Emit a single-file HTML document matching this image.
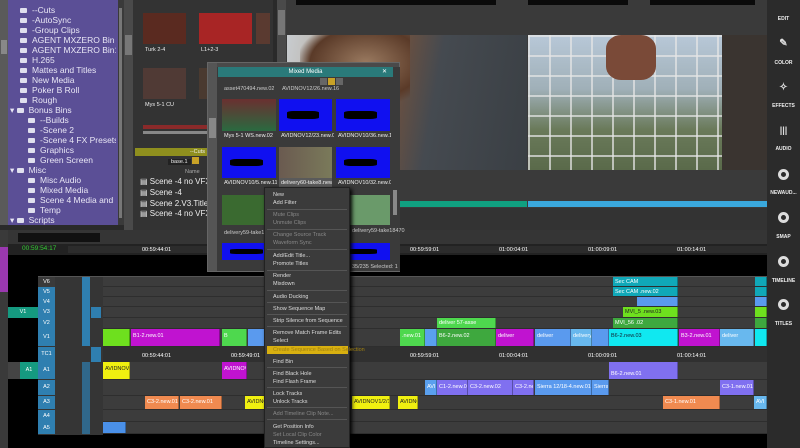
<!DOCTYPE html><html><head><meta charset="utf-8"><style>
*{margin:0;padding:0;box-sizing:border-box}
body{width:800px;height:448px;overflow:hidden;background:#2a2a2a;font-family:"Liberation Sans",sans-serif;position:relative}
div{position:absolute}
.t{white-space:nowrap;overflow:hidden}
.pl{left:20px;width:96px;color:#e8e6f5;font-size:8.5px;line-height:10px}
.pl i{display:inline-block;width:7px;height:5px;background:#e0e0ee;margin-right:5px;border-radius:1px}
.mi{left:8px;font-size:5.5px;color:#ddd;line-height:8px}
.dis{color:#888}
.sep{left:2px;right:2px;height:1px;background:#555}
.lab{font-size:5.5px;color:#eee;white-space:nowrap;overflow:hidden}
.wav{background:#1010f0}
.wav:after{content:"";position:absolute;left:15%;right:25%;top:38%;bottom:38%;background:#000;border-radius:20%}
.row{left:103px;width:664px;background:#3c3c3c;border-bottom:1px solid #2e2e2e}
.c{height:100%;top:0;font-size:5.5px;color:#fff;padding:4px 2px;white-space:nowrap;overflow:hidden;border-right:1px solid rgba(0,0,0,.3)}
.hd{background:#2f7fb0;color:#fff;font-size:5.5px;text-align:center}
.sb{left:767px;width:33px;color:#eee;font-size:5px;font-weight:bold;text-align:center}
.ic{left:778px;width:11px;height:11px;border-radius:50%;border:3px solid #ddd;background:#2b2b2b}
.rl{font-size:5.5px;color:#fff}
</style></head><body>
<div style="left:0;top:0;width:8px;height:225px;background:#5a5a5a"></div>
<div style="left:1px;top:40px;width:6px;height:14px;background:#888"></div>
<div style="left:8px;top:0;width:110px;height:225px;background:#5b4f96"></div>
<div style="left:118px;top:0;width:6px;height:225px;background:#3a3a3a"></div>
<div style="left:119px;top:8px;width:3px;height:210px;background:#777"></div>
<div class="t pl" style="top:5px"><i></i>--Cuts</div>
<div class="t pl" style="top:15px"><i></i>-AutoSync</div>
<div class="t pl" style="top:25px"><i></i>-Group Clips</div>
<div class="t pl" style="top:35px"><i></i>AGENT MXZERO Bin</div>
<div class="t pl" style="top:45px"><i></i>AGENT MXZERO Bin1</div>
<div class="t pl" style="top:55px"><i></i>H.265</div>
<div class="t pl" style="top:65px"><i></i>Mattes and Titles</div>
<div class="t pl" style="top:75px"><i></i>New Media</div>
<div class="t pl" style="top:85px"><i></i>Poker B Roll</div>
<div class="t pl" style="top:95px"><i></i>Rough</div>
<div class="t pl" style="top:105px;left:10px;width:106px">▾ <i></i>Bonus Bins</div>
<div class="t pl" style="top:115px;left:28px;width:88px"><i></i>--Builds</div>
<div class="t pl" style="top:125px;left:28px;width:88px"><i></i>-Scene 2</div>
<div class="t pl" style="top:135px;left:28px;width:88px"><i></i>-Scene 4 FX Presets</div>
<div class="t pl" style="top:145px;left:28px;width:88px"><i></i>Graphics</div>
<div class="t pl" style="top:155px;left:28px;width:88px"><i></i>Green Screen</div>
<div class="t pl" style="top:165px;left:10px;width:106px">▾ <i></i>Misc</div>
<div class="t pl" style="top:175px;left:28px;width:88px"><i></i>Misc Audio</div>
<div class="t pl" style="top:185px;left:28px;width:88px"><i></i>Mixed Media</div>
<div class="t pl" style="top:195px;left:28px;width:88px"><i></i>Scene 4 Media and Cut</div>
<div class="t pl" style="top:205px;left:28px;width:88px"><i></i>Temp</div>
<div class="t pl" style="top:215px;left:10px;width:106px">▾ <i></i>Scripts</div>
<div style="left:124px;top:0;width:9px;height:230px;background:#4a4a4a"></div>
<div style="left:125px;top:35px;width:7px;height:20px;background:#777"></div>
<div style="left:133px;top:0;width:140px;height:230px;background:#333"></div>
<div style="left:143px;top:13px;width:43px;height:31px;background:#5a2a20"></div>
<div class="lab" style="left:145px;top:47px">Turk 2-4</div>
<div style="left:199px;top:13px;width:53px;height:31px;background:#a82525"></div>
<div class="lab" style="left:201px;top:47px">L1+2-3</div>
<div style="left:256px;top:13px;width:14px;height:31px;background:#5a3a30"></div>
<div style="left:143px;top:68px;width:43px;height:31px;background:#503a35"></div>
<div class="lab" style="left:145px;top:102px">Mys 5-1 CU</div>
<div style="left:199px;top:68px;width:10px;height:31px;background:#4a3a30"></div>
<div style="left:143px;top:125px;width:65px;height:4px;background:#8a2a2a"></div>
<div style="left:143px;top:131px;width:65px;height:3px;background:#888"></div>
<div style="left:135px;top:148px;width:72px;height:8px;background:#8f8f1e"></div>
<div class="lab" style="left:190px;top:149px">--Cuts</div>
<div class="lab" style="left:168px;top:159px;background:#222;padding:0 3px">base.1</div>
<div style="left:192px;top:157px;width:7px;height:7px;background:#c9a227"></div>
<div class="lab" style="left:185px;top:169px;color:#aaa">Name</div>
<div class="lab" style="left:140px;top:177px;font-size:8px;width:67px">▤ Scene -4 no VFX.Copy</div>
<div class="lab" style="left:140px;top:188px;font-size:8px">▤ Scene -4</div>
<div class="lab" style="left:140px;top:199px;font-size:8px;width:67px">▤ Scene 2.V3.Titles</div>
<div class="lab" style="left:140px;top:209px;font-size:8px;width:67px">▤ Scene -4 no VFX</div>
<div style="left:277px;top:0;width:9px;height:230px;background:#4a4a4a"></div>
<div style="left:278px;top:10px;width:7px;height:25px;background:#777"></div>
<div style="left:286px;top:0;width:481px;height:230px;background:#3a3a3a"></div>
<div style="left:296px;top:0;width:200px;height:5px;background:#0a0a0a"></div>
<div style="left:528px;top:0;width:100px;height:5px;background:#0a0a0a"></div>
<div style="left:650px;top:0;width:105px;height:5px;background:#0a0a0a"></div>
<div style="left:287px;top:35px;width:240px;height:135px;background:linear-gradient(100deg,#c8ccd0 0%,#b0a08a 30%,#6a5040 45%,#454a50 60%,#3a3f44 100%)"></div>
<div style="left:300px;top:35px;width:110px;height:70px;background:radial-gradient(ellipse at 60% 40%,#9a7a60,#5a3a28 60%,transparent 75%)"></div>
<div style="left:528px;top:35px;width:195px;height:135px;background:linear-gradient(#b8c8d8,#a0b0b8 40%,#6a7a5a 70%,#5a6a4a);"></div>
<div style="left:528px;top:35px;width:195px;height:135px;background-image:linear-gradient(90deg,rgba(230,230,230,.7) 2px,transparent 2px),linear-gradient(rgba(230,230,230,.7) 2px,transparent 2px);background-size:21px 20px"></div>
<div style="left:722px;top:35px;width:45px;height:135px;background:#3a3430"></div>
<div style="left:606px;top:35px;width:50px;height:45px;background:#7a4a38;border-radius:30%"></div>
<div style="left:287px;top:201px;width:240px;height:6px;background:#10a080"></div>
<div style="left:528px;top:201px;width:239px;height:6px;background:#3aa8dc"></div>
<div style="left:287px;top:208px;width:480px;height:22px;background:#333"></div>
<div style="left:767px;top:0;width:33px;height:448px;background:#2b2b2b"></div>
<div class="sb" style="top:16px">EDIT</div>
<div class="sb" style="top:38px;font-size:10px;color:#ddd">✎</div>
<div class="sb" style="top:60px">COLOR</div>
<div class="sb" style="top:82px;font-size:10px;color:#ddd">✧</div>
<div class="sb" style="top:103px">EFFECTS</div>
<div class="sb" style="top:125px;font-size:9px;color:#ddd">|||</div>
<div class="sb" style="top:146px">AUDIO</div>
<div class="ic" style="top:169px"></div>
<div class="sb" style="top:190px">NEWAUD...</div>
<div class="ic" style="top:212px"></div>
<div class="sb" style="top:234px">SMAP</div>
<div class="ic" style="top:256px"></div>
<div class="sb" style="top:278px">TIMELINE</div>
<div class="ic" style="top:299px"></div>
<div class="sb" style="top:321px">TITLES</div>
<div style="left:0;top:230px;width:767px;height:218px;background:#000"></div>
<div style="left:0;top:230px;width:8px;height:218px;background:#3a3a3a"></div>
<div style="left:0;top:247px;width:8px;height:45px;background:#9a38b0"></div>
<div style="left:8px;top:230px;width:759px;height:14px;background:#353535"></div>
<div style="left:18px;top:233px;width:82px;height:9px;background:#111"></div>
<div style="left:8px;top:244px;width:759px;height:11px;background:#222"></div>
<div class="rl" style="left:22px;top:245px;color:#3c3;font-size:6.5px">00:59:54:17</div>
<div style="left:68px;top:246px;width:699px;height:7px;background:#2c2c2c"></div>
<div class="rl" style="left:142px;top:247px">00:59:44:01</div>
<div class="rl" style="left:410px;top:247px">00:59:59:01</div>
<div class="rl" style="left:499px;top:247px">01:00:04:01</div>
<div class="rl" style="left:588px;top:247px">01:00:09:01</div>
<div class="rl" style="left:677px;top:247px">01:00:14:01</div>
<div style="left:38px;top:276px;width:729px;height:1px;background:#555"></div>
<div style="left:38px;top:277px;width:65px;height:158px;background:#353535"></div>
<div class="hd" style="left:38px;top:277px;width:17px;height:10px;line-height:10px;background:#3a3a3a">V6</div>
<div class="hd" style="left:38px;top:287px;width:17px;height:10px;line-height:10px">V5</div>
<div class="hd" style="left:38px;top:297px;width:17px;height:10px;line-height:10px">V4</div>
<div class="hd" style="left:38px;top:307px;width:17px;height:11px;line-height:11px">V3</div>
<div class="hd" style="left:38px;top:318px;width:17px;height:11px;line-height:11px">V2</div>
<div class="hd" style="left:38px;top:329px;width:17px;height:17px;line-height:17px">V1</div>
<div class="hd" style="left:38px;top:347px;width:17px;height:15px;line-height:15px">TC1</div>
<div class="hd" style="left:38px;top:362px;width:17px;height:17px;line-height:17px">A1</div>
<div class="hd" style="left:38px;top:380px;width:17px;height:15px;line-height:15px">A2</div>
<div class="hd" style="left:38px;top:396px;width:17px;height:13px;line-height:13px">A3</div>
<div class="hd" style="left:38px;top:410px;width:17px;height:12px;line-height:12px">A4</div>
<div class="hd" style="left:38px;top:422px;width:17px;height:12px;line-height:12px">A5</div>
<div style="left:82px;top:277px;width:8px;height:69px;background:#2f7fb0"></div>
<div style="left:91px;top:307px;width:10px;height:11px;background:#2f7fb0"></div>
<div style="left:91px;top:347px;width:10px;height:15px;background:#2f7fb0"></div>
<div style="left:82px;top:362px;width:8px;height:72px;background:#2f7fb0;opacity:.7"></div>
<div class="hd" style="left:8px;top:307px;width:30px;height:11px;line-height:11px;background:#159a80">V1</div>
<div class="hd" style="left:20px;top:362px;width:18px;height:17px;line-height:17px;background:#159a80">A1</div>
<div style="left:8px;top:362px;width:12px;height:17px;background:#444"></div>
<div class="row" style="top:277px;height:10px"><div class="c" style="left:510px;width:65px;background:#10a8b8;padding-top:2px">Sec CAM</div><div class="c" style="left:652px;width:12px;background:#10a8b8"></div></div>
<div class="row" style="top:287px;height:10px"><div class="c" style="left:510px;width:65px;background:#10a8b8;padding-top:2px">Sec CAM .new.02</div><div class="c" style="left:652px;width:12px;background:#10a8b8"></div></div>
<div class="row" style="top:297px;height:10px"><div class="c" style="left:534px;width:41px;background:#5a9aee"></div><div class="c" style="left:652px;width:12px;background:#5a9aee"></div></div>
<div class="row" style="top:307px;height:11px"><div class="c" style="left:520px;width:55px;background:#6ee01e;color:#222;padding-top:2px">MVI_5 .new.03</div><div class="c" style="left:652px;width:12px;background:#6ee01e"></div></div>
<div class="row" style="top:318px;height:11px"><div class="c" style="left:334px;width:59px;background:#4ed84e;padding-top:2px">deliver 57-asse</div><div class="c" style="left:510px;width:65px;background:#3ea83e;padding-top:2px">MVI_56 .02</div><div class="c" style="left:652px;width:12px;background:#3ea83e"></div></div>
<div class="row" style="top:329px;height:18px"><div class="c" style="left:0;width:27px;background:#6ee01e"></div><div class="c" style="left:28px;width:89px;background:#c013d0">B1-2.new.01</div><div class="c" style="left:119px;width:25px;background:#4ed84e">B</div><div class="c" style="left:145px;width:17px;background:#5a9aee"></div><div class="c" style="left:297px;width:25px;background:#4ed84e">.new.01</div><div class="c" style="left:322px;width:12px;background:#5aa0ee"></div><div class="c" style="left:334px;width:59px;background:#3ea83e">B6-2.new.02</div><div class="c" style="left:393px;width:38px;background:#c013d0">deliver</div><div class="c" style="left:432px;width:36px;background:#5a9aee">deliver</div><div class="c" style="left:468px;width:21px;background:#68b8ee">delivery</div><div class="c" style="left:489px;width:17px;background:#5a9aee"></div><div class="c" style="left:506px;width:69px;background:#10e8f0;color:#123">B6-2.new.03</div><div class="c" style="left:576px;width:41px;background:#c013d0">B3-2.new.01</div><div class="c" style="left:617px;width:34px;background:#68b8ee">deliver</div><div class="c" style="left:652px;width:12px;background:#10e8f0"></div></div>
<div style="left:103px;top:347px;width:664px;height:15px;background:#303030"></div>
<div class="rl" style="left:142px;top:353px">00:59:44:01</div>
<div class="rl" style="left:231px;top:353px">00:59:49:01</div>
<div class="rl" style="left:410px;top:353px">00:59:59:01</div>
<div class="rl" style="left:499px;top:353px">01:00:04:01</div>
<div class="rl" style="left:588px;top:353px">01:00:09:01</div>
<div class="rl" style="left:677px;top:353px">01:00:14:01</div>
<div class="row" style="top:362px;height:18px"><div class="c" style="left:0;width:27px;background:#f0f010;color:#222">AVIDNOV11/10</div><div class="c" style="left:119px;width:25px;background:#c013d0">AVIDNOV1</div><div class="c" style="left:506px;width:69px;background:#8070f0;padding-top:9px">B6-2.new.01</div></div>
<div class="row" style="top:380px;height:16px"><div class="c" style="left:322px;width:12px;background:#5aa0ee">AVI</div><div class="c" style="left:334px;width:31px;background:#8070f0">C1-2.new.01</div><div class="c" style="left:365px;width:45px;background:#8070f0">C3-2.new.02</div><div class="c" style="left:410px;width:21px;background:#8070f0">C3-2.new</div><div class="c" style="left:432px;width:57px;background:#5a9aee">Sierra 12/18-4.new.01</div><div class="c" style="left:489px;width:17px;background:#5a9aee">Sierra</div><div class="c" style="left:617px;width:34px;background:#8070f0">C3-1.new.01</div></div>
<div class="row" style="top:396px;height:14px"><div class="c" style="left:42px;width:34px;background:#f08a50;padding-top:3px">C3-2.new.01</div><div class="c" style="left:77px;width:42px;background:#f08a50;padding-top:3px">C3-2.new.01</div><div class="c" style="left:142px;width:20px;background:#f0f010;color:#222;padding-top:3px">AVIDNO</div><div class="c" style="left:249px;width:38px;background:#f0f010;color:#222;padding-top:3px">AVIDNOV1/2/15</div><div class="c" style="left:295px;width:20px;background:#f0f010;color:#222;padding-top:3px">AVIDNOV</div><div class="c" style="left:560px;width:57px;background:#f08a50;padding-top:3px">C3-1.new.01</div><div class="c" style="left:651px;width:13px;background:#68b8ee;padding-top:3px">AVI</div></div>
<div class="row" style="top:410px;height:12px"></div>
<div class="row" style="top:422px;height:12px"><div class="c" style="left:0;width:23px;background:#4a90e8"></div></div>
<div style="left:207px;top:62px;width:193px;height:210px;background:#4a4a4a;border:1px solid #666"></div>
<div style="left:208px;top:63px;width:9px;height:208px;background:#555"></div>
<div style="left:209px;top:118px;width:7px;height:20px;background:#888"></div>
<div style="left:217px;top:67px;width:183px;height:204px;background:#3a3a3a"></div>
<div style="left:218px;top:67px;width:175px;height:10px;background:#2a7a7a;color:#fff;font-size:6px;text-align:center;line-height:10px">Mixed Media<span style="position:absolute;right:6px">✕</span></div>
<div style="left:320px;top:78px;width:7px;height:7px;background:#666"></div>
<div style="left:328px;top:78px;width:7px;height:7px;background:#c9a227"></div>
<div style="left:336px;top:78px;width:7px;height:7px;background:#666"></div>
<div class="lab" style="left:224px;top:86px;color:#ccc">asset470494.new.02</div>
<div class="lab" style="left:282px;top:86px;color:#ccc">AVIDNOV12/26.new.16</div>
<div style="left:222px;top:99px;width:54px;height:32px;background:linear-gradient(#6a3030,#2a6a40)"></div>
<div class="wav" style="left:279px;top:99px;width:53px;height:32px"></div>
<div class="wav" style="left:336px;top:99px;width:54px;height:32px"></div>
<div class="lab" style="left:224px;top:133px;width:53px">Mys 5-1 WS.new.02</div>
<div class="lab" style="left:281px;top:133px;width:53px">AVIDNOV12/23.new.02</div>
<div class="lab" style="left:338px;top:133px;width:53px">AVIDNOV10/36.new.18</div>
<div class="wav" style="left:222px;top:147px;width:54px;height:31px"></div>
<div style="left:279px;top:147px;width:53px;height:31px;background:linear-gradient(90deg,#6a5a50,#7a7a5a)"></div>
<div class="wav" style="left:336px;top:147px;width:54px;height:31px"></div>
<div style="left:279px;top:178px;width:53px;height:12px;background:#5a5a5a"></div>
<div class="lab" style="left:224px;top:180px;width:53px">AVIDNOV10/5.new.11</div>
<div class="lab" style="left:281px;top:180px;width:51px">delivery60-take8.new.</div>
<div class="lab" style="left:338px;top:180px;width:53px">AVIDNOV10/32.new.02</div>
<div style="left:222px;top:195px;width:54px;height:30px;background:#3a6a30"></div>
<div style="left:336px;top:195px;width:54px;height:30px;background:#6a9a6a"></div>
<div class="lab" style="left:224px;top:230px;color:#ccc">delivery59-take1</div>
<div class="lab" style="left:352px;top:228px;color:#ccc">delivery59-take18470</div>
<div class="wav" style="left:222px;top:243px;width:54px;height:17px"></div>
<div class="wav" style="left:336px;top:243px;width:54px;height:17px"></div>
<div class="lab" style="left:352px;top:264px;color:#ccc">35/235 Selected: 1</div>
<div style="left:393px;top:190px;width:4px;height:25px;background:#888"></div>
<div style="left:264px;top:187px;width:86px;height:261px;background:#3b3b3b;border:1px solid #222;box-shadow:2px 2px 4px #000">
<div class="t mi" style="top:3px">New<span style="position:absolute;left:73px">▸</span></div>
<div class="t mi" style="top:11px">Add Filter<span style="position:absolute;left:73px">▸</span></div>
<div class="sep" style="top:21px"></div>
<div class="t mi dis" style="top:23px">Mute Clips</div>
<div class="t mi dis" style="top:31px">Unmute Clips</div>
<div class="sep" style="top:41px"></div>
<div class="t mi dis" style="top:43px">Change Source Track</div>
<div class="t mi dis" style="top:51px">Waveform Sync</div>
<div class="sep" style="top:61px"></div>
<div class="t mi" style="top:64px">Add/Edit Title...</div>
<div class="t mi" style="top:72px">Promote Titles<span style="position:absolute;left:73px">▸</span></div>
<div class="sep" style="top:82px"></div>
<div class="t mi" style="top:84px">Render<span style="position:absolute;left:73px">▸</span></div>
<div class="t mi" style="top:92px">Mixdown<span style="position:absolute;left:73px">▸</span></div>
<div class="sep" style="top:102px"></div>
<div class="t mi" style="top:105px">Audio Ducking</div>
<div class="sep" style="top:114px"></div>
<div class="t mi" style="top:117px">Show Sequence Map</div>
<div class="sep" style="top:126px"></div>
<div class="t mi" style="top:129px">Strip Silence from Sequence</div>
<div class="sep" style="top:138px"></div>
<div class="t mi" style="top:141px">Remove Match Frame Edits</div>
<div class="t mi" style="top:149px">Select<span style="position:absolute;left:73px">▸</span></div>
<div style="left:2px;top:158px;width:81px;height:8px;background:#d8b010"></div>
<div class="t mi" style="top:158px;color:#a08010">Create Sequence Based on Selection</div>
<div class="t mi" style="top:170px">Find Bin</div>
<div class="sep" style="top:179px"></div>
<div class="t mi" style="top:182px">Find Black Hole</div>
<div class="t mi" style="top:190px">Find Flash Frame</div>
<div class="sep" style="top:199px"></div>
<div class="t mi" style="top:202px">Lock Tracks</div>
<div class="t mi" style="top:210px">Unlock Tracks</div>
<div class="sep" style="top:219px"></div>
<div class="t mi dis" style="top:222px">Add Timeline Clip Note...</div>
<div class="sep" style="top:231px"></div>
<div class="t mi" style="top:235px">Get Position Info</div>
<div class="t mi dis" style="top:243px">Set Local Clip Color</div>
<div class="t mi" style="top:251px">Timeline Settings...</div>
</div>
</body></html>
